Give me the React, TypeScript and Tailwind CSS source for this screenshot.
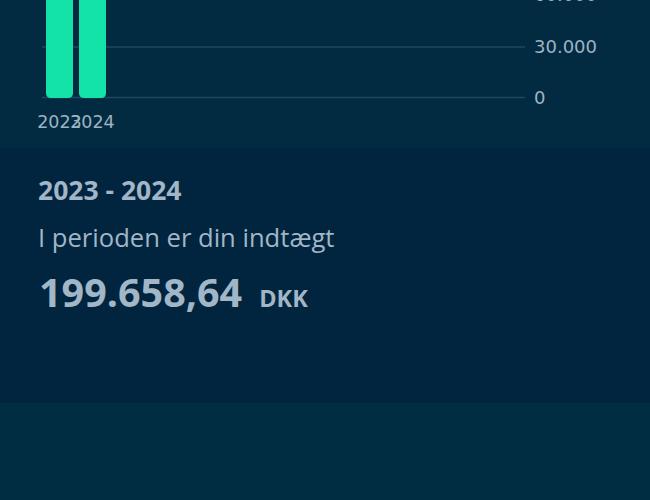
import React from 'react';

const bars = [
  { label: '2023', x: 46 },
  { label: '2024', x: 79 },
];

function Chart() {
  return (
    <svg width="650" height="148" viewBox="0 0 650 148" className="block">
      <line x1="42" y1="-3" x2="525" y2="-3" stroke="#1d4a60" strokeWidth="1.5" />
      <line x1="42" y1="47" x2="525" y2="47" stroke="#1d4a60" strokeWidth="1.5" />
      <line x1="42" y1="97.5" x2="525" y2="97.5" stroke="#1d4a60" strokeWidth="1.5" />
      {bars.map((b) => (
        <g key={b.label}>
          <path
            d={`M${b.x} -10 H${b.x + 27} V${93} Q${b.x + 27} 98 ${b.x + 22} 98 H${b.x + 5} Q${b.x} 98 ${b.x} 93 Z`}
            fill="#14e3a9"
          />
          <text
            x={b.x + 13.5}
            y="128"
            textAnchor="middle"
            fill="#9db3c3"
            fontSize="17.5"
            fontFamily="'DejaVu Sans', sans-serif"
          >
            {b.label}
          </text>
        </g>
      ))}
      <text x="534" y="1" fill="#9db3c3" fontSize="18" fontFamily="'DejaVu Sans', sans-serif">60.000</text>
      <text x="534" y="53" fill="#9db3c3" fontSize="18" fontFamily="'DejaVu Sans', sans-serif">30.000</text>
      <text x="534" y="104" fill="#9db3c3" fontSize="18" fontFamily="'DejaVu Sans', sans-serif">0</text>
    </svg>
  );
}

export default function App() {
  return (
    <div className="w-[650px] h-[500px] flex flex-col bg-[#002d42] font-['Open_Sans',sans-serif] overflow-hidden">
      <div className="h-[148px] bg-[#022b42]">
        <Chart />
      </div>
      <div className="h-[255px] bg-[#01253e] px-[38px] pt-[24px] text-[#a1b6c7]">
        <div className="text-[26.5px] font-bold leading-[36px]">2023 - 2024</div>
        <div className="text-[25.6px] leading-[36px] mt-[12px]">I perioden er din indtægt</div>
        <div className="flex items-baseline gap-[17px] mt-[10px] pl-[1px]">
          <span className="text-[39.5px] font-bold leading-[52px]">199.658,64</span>
          <span className="text-[23.5px] font-bold">DKK</span>
        </div>
      </div>
      <div className="flex-1 bg-[#002d42]" />
    </div>
  );
}
